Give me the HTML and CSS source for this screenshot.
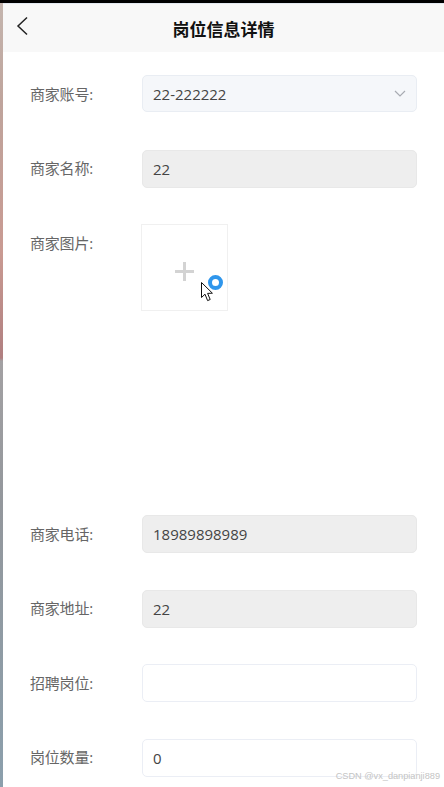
FILE: index.html

```html
<!DOCTYPE html>
<html lang="zh-CN">
<head>
  <meta charset="UTF-8" />
  <meta name="viewport" content="width=device-width, initial-scale=1.0"/>
  <title>岗位信息详情</title>
  <link rel="stylesheet" href="styles.css">
</head>
<body>

  <div class="top-edge"></div>

  <div class="shell">
    <div class="side-strip"></div>

    <div class="page">
      <header class="navbar">
        <svg class="back" width="12" height="20" viewBox="0 0 12 20">
          <path d="M11 1.5 L2 10 L11 18.5" fill="none" stroke="#222" stroke-width="1.5"/>
        </svg>
        <h1>岗位信息详情</h1>
      </header>

      <form class="form">
        <div class="row">
          <label>商家账号:</label>
          <div class="field select">
            <span>22-222222</span>
            <svg width="12" height="7" viewBox="0 0 12 7">
              <path d="M1 1 L6 6 L11 1" fill="none" stroke="#a8abb2" stroke-width="1.2"/>
            </svg>
          </div>
        </div>

        <div class="row">
          <label>商家名称:</label>
          <div class="field disabled">22</div>
        </div>

        <div class="row row-upload">
          <label>商家图片:</label>
          <div class="upload">
            <span class="plus"></span>
            <span class="busy"></span>
            <svg class="cursor" width="16" height="22" viewBox="0 0 16 22">
              <path d="M1.5 1.5 V16.5 L5 13.2 L7.6 19.6 L10.2 18.5 L7.6 12.4 L12.4 12.2 Z" fill="#fff" stroke="#111" stroke-width="1"/>
            </svg>
          </div>
        </div>

        <div class="row">
          <label>商家电话:</label>
          <div class="field disabled">18989898989</div>
        </div>

        <div class="row">
          <label>商家地址:</label>
          <div class="field disabled">22</div>
        </div>

        <div class="row">
          <label>招聘岗位:</label>
          <div class="field"></div>
        </div>

        <div class="row">
          <label>岗位数量:</label>
          <div class="field">0</div>
        </div>
      </form>
    </div>
  </div>

  <div class="watermark">CSDN @vx_danpianji889</div>

</body>
</html>
```

FILE: styles.css

```css
html, body {
  height: 100%;
}

body {
  font-family: "Open Sans", "Noto Sans CJK SC", sans-serif;
  background: #fff;
  color: #444;
  margin: 0;
  padding: 0;
  overflow: hidden;
}

.top-edge {
  height: 3px;
  background: #000;
}

.shell {
  display: flex;
  height: 784px;
}

.side-strip {
  width: 3px;
  flex-shrink: 0;
  background: linear-gradient(to bottom,
    #c4b5ae 0,
    #bfa49c 100px,
    #c99a92 250px,
    #b07f80 355px,
    #a3a1a3 358px,
    #93979c 500px,
    #8b9fac 784px);
}

.page {
  flex: 1;
  min-width: 0;
}

.navbar {
  height: 48px;
  border-top: 1px solid #e3e8f0;
  background: #f8f8f8;
  display: flex;
  align-items: center;
  justify-content: center;
  position: relative;
}

.navbar h1 {
  margin: 0;
  font-size: 17px;
  font-weight: 700;
  color: #111;
}

.back {
  position: absolute;
  left: 13px;
  top: 12px;
}

.form {
  padding: 23px 27px 0 27px;
}

.row {
  display: flex;
  align-items: center;
  height: 38px;
  margin-bottom: 36.6px;
}

.row-upload {
  align-items: flex-start;
  height: 87px;
  margin-bottom: 204px;
}

.row label {
  width: 112px;
  flex-shrink: 0;
  margin-top: -2px;
  font-size: 15px;
  color: #666;
  letter-spacing: -0.2px;
}

.row-upload label {
  margin-top: 8px;
}

.field {
  flex: 1;
  height: 38px;
  box-sizing: border-box;
  padding: 0 10px;
  display: flex;
  align-items: center;
  justify-content: space-between;
  font-size: 15px;
  color: #444;
  background: #fff;
  border: 1px solid #ebeef5;
  border-radius: 5px;
}

.field.select {
  height: 37px;
  margin-bottom: 1px;
  background: #f5f7fa;
  border-color: #e9edf3;
}

.field.disabled {
  background: #eee;
  border-color: #e8e8e8;
}

.upload {
  width: 87px;
  height: 87px;
  box-sizing: border-box;
  margin-left: -1px;
  border: 1px solid #f0f0f0;
  position: relative;
}

.plus {
  position: absolute;
  left: 33px;
  top: 37px;
  width: 19px;
  height: 19px;
  background:
    linear-gradient(#d3d3d3, #d3d3d3) center / 19px 3px no-repeat,
    linear-gradient(#d3d3d3, #d3d3d3) center / 3px 19px no-repeat;
}

.busy {
  position: absolute;
  left: 66px;
  top: 50px;
  width: 15px;
  height: 15px;
  box-sizing: border-box;
  border: 4px solid #2f96ec;
  border-radius: 50%;
  background: #fff;
}

.cursor {
  position: absolute;
  left: 58px;
  top: 56px;
}

.watermark {
  position: absolute;
  right: 4px;
  bottom: 6px;
  font-family: "Liberation Sans", sans-serif;
  font-size: 9.2px;
  color: #c4c4c4;
}
```
